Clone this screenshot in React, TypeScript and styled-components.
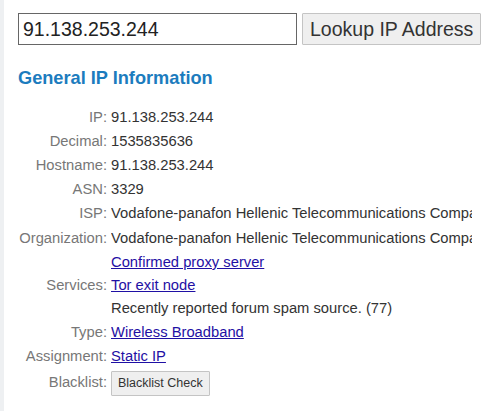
import React from "react";
import styled, { createGlobalStyle } from "styled-components";

const Global = createGlobalStyle`
  html, body { margin: 0; padding: 0; background: #fff; }
  body { font-family: "Liberation Sans", Arial, sans-serif; }
`;

const Page = styled.div`
  width: 495px;
  height: 411px;
  box-sizing: border-box;
  border-left: 4px solid #eef0f2;
  padding: 13px 0 0 14px;
  overflow: hidden;
`;

const SearchBar = styled.form`
  display: flex;
  gap: 5px;
  margin: 0;
`;

const IpInput = styled.input`
  width: 279px;
  height: 32px;
  box-sizing: border-box;
  border: 1px solid #666;
  padding: 0 4px;
  font-family: "Liberation Sans", Arial, sans-serif;
  font-size: 19.5px;
  color: #222;
  outline: none;
`;

const Button = styled.button<{ $small?: boolean }>`
  box-sizing: border-box;
  height: ${(p) => (p.$small ? "25px" : "32px")};
  padding: ${(p) => (p.$small ? "0 6px" : "0 7px")};
  background: #efefef;
  border: 1px solid #c4c4c4;
  border-radius: 1px;
  font-family: "Liberation Sans", Arial, sans-serif;
  font-size: ${(p) => (p.$small ? "12.5px" : "19.5px")};
  color: #333;
  cursor: pointer;
`;

const Heading = styled.h2`
  margin: 22px 0 0 0;
  font-size: 18.2px;
  font-weight: bold;
  color: #1c7cbe;
  line-height: 22px;
`;

const Table = styled.div`
  margin-top: 16px;
  width: 454px;
  overflow: hidden;
  display: grid;
  grid-template-columns: 89px 1fr;
  column-gap: 4px;
  font-size: 14.75px;
  color: #333;
`;

const Label = styled.div`
  text-align: right;
  color: #777;
  padding: 0.5px 0;
  line-height: 23.2px;
  white-space: nowrap;
  align-self: start;
`;

const Value = styled.div`
  padding: 0.5px 0;
  line-height: 23.2px;
  white-space: nowrap;
  overflow: hidden;
  display: flex;
  flex-direction: column;
  align-items: flex-start;
`;

const ServicesValue = styled(Value)`
  line-height: 23px;
`;

const Link = styled.a`
  color: #1f10a4;
  text-decoration: underline;
`;

const ServicesLabel = styled(Label)`
  align-self: center;
`;

const BlacklistLabel = styled(Label)`
  padding-top: 2.4px;
`;

const ButtonCell = styled(Value)`
  padding-top: 2px;
`;

const rows: [string, React.ReactNode][] = [
  ["IP:", "91.138.253.244"],
  ["Decimal:", "1535835636"],
  ["Hostname:", "91.138.253.244"],
  ["ASN:", "3329"],
  ["ISP:", "Vodafone-panafon Hellenic Telecommunications Company"],
  ["Organization:", "Vodafone-panafon Hellenic Telecommunications Company"],
];

export default function App() {
  return (
    <>
      <Global />
      <Page>
        <SearchBar onSubmit={(e) => e.preventDefault()}>
          <IpInput defaultValue="91.138.253.244" />
          <Button type="submit">Lookup IP Address</Button>
        </SearchBar>
        <Heading>General IP Information</Heading>
        <Table>
          {rows.map(([l, v]) => (
            <React.Fragment key={l}>
              <Label>{l}</Label>
              <Value>{v}</Value>
            </React.Fragment>
          ))}
          <ServicesLabel>Services:</ServicesLabel>
          <ServicesValue>
            <Link href="#">Confirmed proxy server</Link>
            <Link href="#">Tor exit node</Link>
            <span>Recently reported forum spam source. (77)</span>
          </ServicesValue>
          <Label>Type:</Label>
          <Value>
            <Link href="#">Wireless Broadband</Link>
          </Value>
          <Label>Assignment:</Label>
          <Value>
            <Link href="#">Static IP</Link>
          </Value>
          <BlacklistLabel>Blacklist:</BlacklistLabel>
          <ButtonCell>
            <Button $small type="button">Blacklist Check</Button>
          </ButtonCell>
        </Table>
      </Page>
    </>
  );
}
